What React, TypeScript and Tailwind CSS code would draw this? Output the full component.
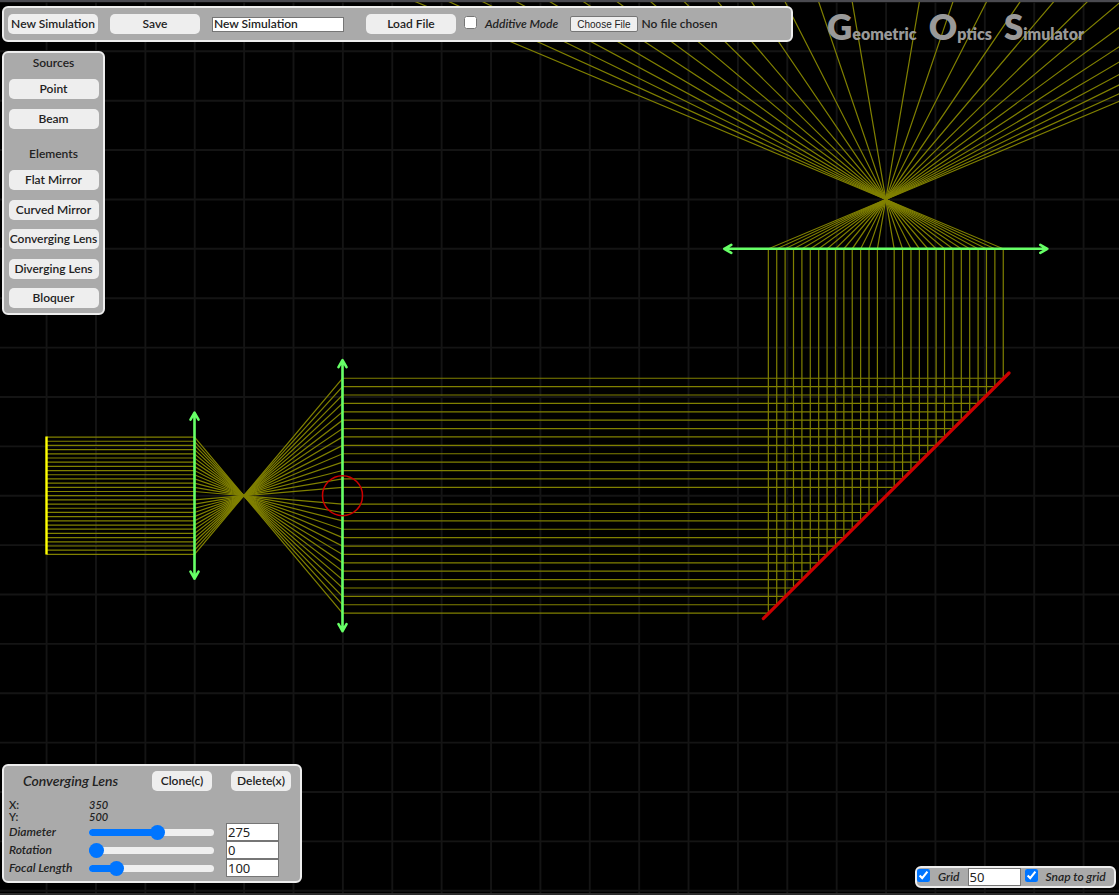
import { useState, type ReactNode } from "react";

const STEP = 49.38;
const ORIGIN_X = 46.6;
const ORIGIN_Y = 49.3;
const AXIS_Y = 493.7;
const FOCUS_X = 885.8;
const FOCUS_Y = 197.4;
const LENS_A_X = 194.5;
const LENS_B_X = 342.5;
const LENS_C_Y = 246.8;

const indices = Array.from({ length: 29 }, (_, i) => i - 14);
const gridLines = Array.from({ length: 80 }, (_, i) => i - 1);

function rayPath(i: number) {
  const y1 = AXIS_Y + i * 4.19;
  if (i === 0) return `M${ORIGIN_X} ${y1}H${LENS_A_X}`;
  const y2 = AXIS_Y - i * 8.39;
  const x3 = FOCUS_X + i * 8.39;
  const x4 = FOCUS_X - i * 8.39 * 5;
  const y4 = FOCUS_Y - STEP * 5;
  return `M${ORIGIN_X} ${y1}H${LENS_A_X}L${LENS_B_X} ${y2}H${x3}V${LENS_C_Y}L${x4} ${y4}`;
}

function Lens({ x, y, half, vertical }: { x: number; y: number; half: number; vertical: boolean }) {
  return (
    <path
      transform={`translate(${x} ${y})${vertical ? "" : " rotate(90)"}`}
      d={`M0 ${-half}V${half}M-4 ${-half + 7}L0 ${-half}L4 ${-half + 7}M-4 ${half - 7}L0 ${half}L4 ${half - 7}`}
      fill="none"
      stroke="#66ff66"
      strokeWidth="2.6"
      strokeLinecap="round"
      strokeLinejoin="round"
    />
  );
}

function Scene() {
  return (
    <svg className="absolute inset-0 h-full w-full" role="img" aria-label="Optical bench">
      <g stroke="#141414" strokeWidth="1.9">
        {gridLines.map((i) => (
          <line key={`v${i}`} x1={ORIGIN_X + i * STEP} x2={ORIGIN_X + i * STEP} y1="0" y2="100%" />
        ))}
        {gridLines.map((i) => (
          <line key={`h${i}`} y1={ORIGIN_Y + i * STEP} y2={ORIGIN_Y + i * STEP} x1="0" x2="100%" />
        ))}
      </g>
      <g fill="none" stroke="#808000" strokeWidth="1.2">
        {indices.map((i) => (
          <path key={i} d={rayPath(i)} />
        ))}
      </g>
      <line x1="46.5" x2="46.5" y1="434.5" y2="552.5" stroke="#ffff00" strokeWidth="2.4" />
      <Lens x={LENS_A_X} y={AXIS_Y} half={83} vertical />
      <Lens x={LENS_B_X} y={AXIS_Y} half={135.5} vertical />
      <Lens x={FOCUS_X} y={LENS_C_Y} half={161.5} vertical={false} />
      <line x1="763.3" y1="616.6" x2="1009" y2="371" stroke="#cc0000" strokeWidth="3.2" strokeLinecap="round" />
      <circle cx={LENS_B_X} cy={AXIS_Y} r="20" fill="none" stroke="#cc0000" strokeWidth="1.5" />
    </svg>
  );
}

const panel = "rounded-md border-2 border-[#eeeeee] bg-[#aaaaaa]";

function PanelButton({ children, className = "w-[90px]" }: { children: ReactNode; className?: string }) {
  return (
    <button type="button" className={`h-5 shrink-0 rounded-[5px] bg-[#eeeeee] text-center whitespace-nowrap ${className}`}>
      {children}
    </button>
  );
}

function SliderRow({ label, id, initial, max }: { label: string; id: string; initial: number; max: number }) {
  const [value, setValue] = useState(initial);
  const share = Math.min(1, value / max);
  return (
    <div className="flex h-[18px] items-center">
      <label htmlFor={id} className="w-20 italic">
        {label}
      </label>
      <div className="relative h-4 w-[125px]">
        <div className="absolute inset-x-0 top-[5px] h-[7px] overflow-hidden rounded-full bg-[#efefef]">
          <div className="h-full bg-[#0075ff]" style={{ width: `calc(${share * 100}% + ${(0.5 - share) * 15}px)` }} />
        </div>
        <input
          id={id}
          type="range"
          min={0}
          max={max}
          value={value}
          onChange={(e) => setValue(Number(e.target.value))}
          className="absolute inset-0 h-4 w-full appearance-none bg-transparent [&::-webkit-slider-thumb]:h-[15px] [&::-webkit-slider-thumb]:w-[15px] [&::-webkit-slider-thumb]:appearance-none [&::-webkit-slider-thumb]:rounded-full [&::-webkit-slider-thumb]:bg-[#0075ff]"
        />
      </div>
      <input
        type="text"
        aria-label={`${label} value`}
        value={value}
        onChange={(e) => setValue(Number(e.target.value) || 0)}
        className="ml-3 h-[18px] w-[53px] border border-[#767676] bg-white px-px font-['Noto_Sans',sans-serif] text-[13px] font-normal"
      />
    </div>
  );
}

function TitleWord({ initial, rest }: { initial: string; rest: string }) {
  return (
    <span className="text-[16px]">
      <span className="text-[35px]">{initial}</span>
      {rest}
    </span>
  );
}

export default function App() {
  const [name, setName] = useState("New Simulation");
  const [grid, setGrid] = useState("50");
  return (
    <div className="relative flex min-h-screen flex-col overflow-hidden border-t-2 border-b-2 border-t-[#4a4a50] border-b-[#2c2c2c] bg-black font-['Lato',sans-serif] text-[12px] leading-4 font-semibold text-[#222222]">
      <Scene />

      <header className="relative flex h-[39px] items-start px-0.5 pt-1">
        <div className={`flex h-9 w-[791px] shrink-0 items-center px-1 ${panel}`}>
          <PanelButton>New Simulation</PanelButton>
          <PanelButton className="ml-3 w-[90px]">Save</PanelButton>
          <input
            type="text"
            aria-label="Simulation name"
            value={name}
            onChange={(e) => setName(e.target.value)}
            className="ml-3 h-[15px] w-[132px] border border-[#767676] bg-white px-px"
          />
          <PanelButton className="ml-[22px] w-[90px]">Load File</PanelButton>
          <label className="ml-2 flex items-center gap-2 italic">
            <input type="checkbox" className="mb-1 size-[13px]" />
            Additive Mode
          </label>
          <label className="ml-3 flex items-center gap-1">
            <input type="file" className="sr-only" />
            <span className="h-4 rounded-[2px] border border-[#767676] bg-[#efefef] px-1.5 font-['Liberation_Sans',sans-serif] text-[10px] leading-[15px] font-normal">
              Choose File
            </span>
            No file chosen
          </label>
        </div>
        <h1 className="ml-[34px] flex h-9 items-baseline gap-3 leading-[40px] font-extrabold whitespace-nowrap text-[#999999]">
          <TitleWord initial="G" rest="eometric" />
          <TitleWord initial="O" rest="ptics" />
          <TitleWord initial="S" rest="imulator" />
        </h1>
      </header>

      <main className="relative flex grow flex-col items-start px-0.5 pt-2.5">
        <section className={`flex h-[264px] w-[103px] flex-col items-center ${panel}`}>
          <h2 className="mt-0.5">Sources</h2>
          <div className="mt-2 flex flex-col gap-2.5">
            <PanelButton>Point</PanelButton>
            <PanelButton>Beam</PanelButton>
          </div>
          <h2 className="mt-[17px]">Elements</h2>
          <div className="mt-2 flex h-[138px] flex-col justify-between">
            <PanelButton>Flat Mirror</PanelButton>
            <PanelButton>Curved Mirror</PanelButton>
            <PanelButton>Converging Lens</PanelButton>
            <PanelButton>Diverging Lens</PanelButton>
            <PanelButton>Bloquer</PanelButton>
          </div>
        </section>
      </main>

      <footer className="relative flex items-end justify-between pr-[3px] pl-0.5">
        <section className={`mb-2.5 h-[119px] w-[300px] px-[5px] pt-[5px] ${panel}`}>
          <div className="flex items-center">
            <h2 className="w-[143px] pl-3.5 text-[14px] italic">Converging Lens</h2>
            <PanelButton className="w-[60px]">Clone(c)</PanelButton>
            <PanelButton className="ml-[19px] w-[60px]">Delete(x)</PanelButton>
          </div>
          <dl className="mt-2 grid grid-cols-[80px_1fr] text-[11px] leading-[12px]">
            <dt>X:</dt>
            <dd className="italic">350</dd>
            <dt>Y:</dt>
            <dd className="italic">500</dd>
          </dl>
          <SliderRow label="Diameter" id="diameter" initial={275} max={500} />
          <SliderRow label="Rotation" id="rotation" initial={0} max={360} />
          <SliderRow label="Focal Length" id="focal" initial={100} max={540} />
        </section>

        <div className={`mb-[5px] flex h-[22px] w-[201px] items-center ${panel}`}>
          <input id="grid" type="checkbox" defaultChecked className="mb-1 size-[13px]" />
          <label htmlFor="grid" className="ml-2 italic">
            Grid
          </label>
          <input
            type="text"
            aria-label="Grid size"
            value={grid}
            onChange={(e) => setGrid(e.target.value)}
            className="ml-2 h-[18px] w-[53px] border border-[#767676] bg-white px-px font-['Noto_Sans',sans-serif] text-[13px] font-normal"
          />
          <input id="snap" type="checkbox" defaultChecked className="mb-1 ml-1 size-[13px]" />
          <label htmlFor="snap" className="ml-2 italic">
            Snap to grid
          </label>
        </div>
      </footer>
    </div>
  );
}
